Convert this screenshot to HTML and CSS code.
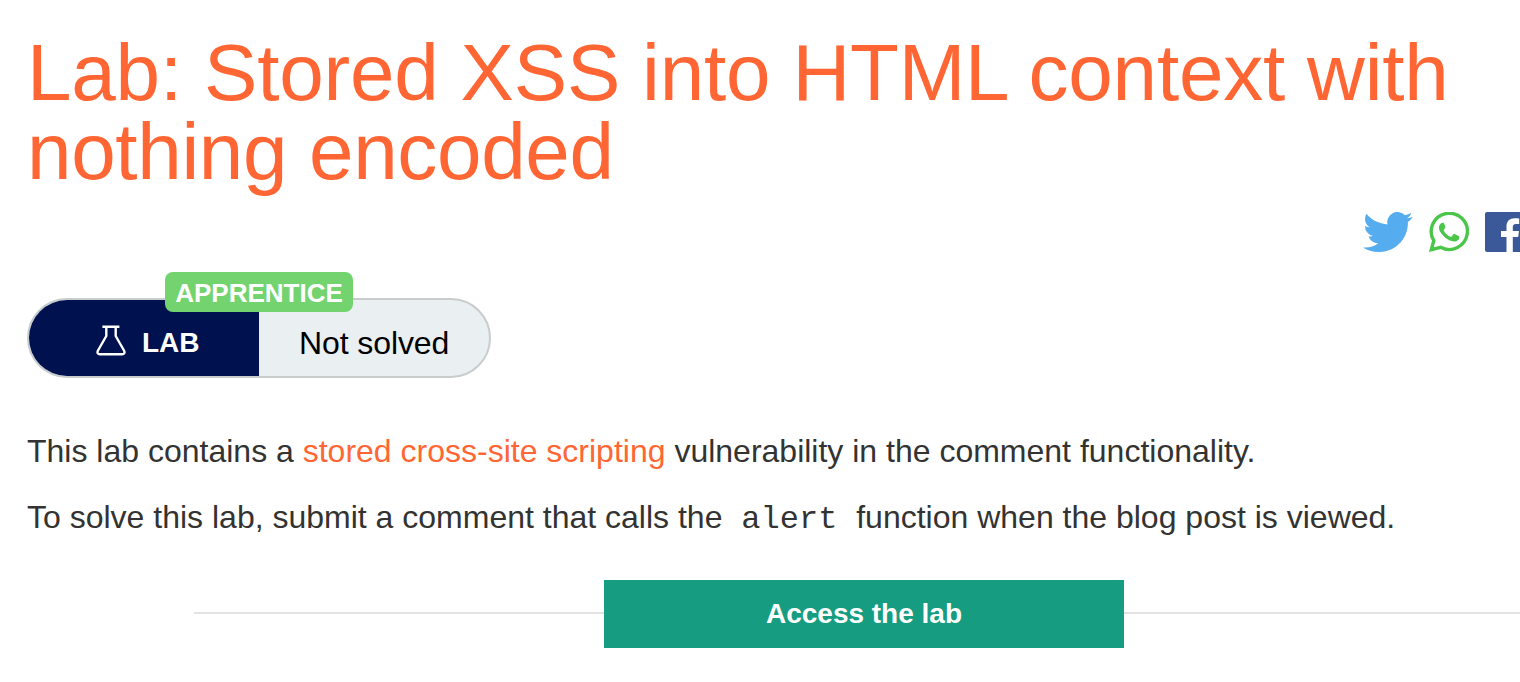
FILE: index.html
```html
<!DOCTYPE html>
<html lang="en">
<head>
<meta charset="utf-8">
<title>Lab: Stored XSS into HTML context with nothing encoded</title>
<link rel="stylesheet" href="styles.css">
</head>
<body>
<main class="page">
  <h1 class="title"><span class="title-first">Lab: Stored XSS into HTML context with</span> <span class="title-second">nothing encoded</span></h1>
  <div class="share">
    <svg class="twitter" viewBox="0 2.25 24 19.5" preserveAspectRatio="none" aria-label="Twitter"><path fill="#55acee" d="M23.953 4.57a10 10 0 01-2.825.775 4.958 4.958 0 002.163-2.723c-.951.555-2.005.959-3.127 1.184a4.92 4.92 0 00-8.384 4.482C7.69 8.095 4.067 6.13 1.64 3.162a4.822 4.822 0 00-.666 2.475c0 1.71.87 3.213 2.188 4.096a4.904 4.904 0 01-2.228-.616v.06a4.923 4.923 0 003.946 4.827 4.996 4.996 0 01-2.212.085 4.936 4.936 0 004.604 3.417 9.867 9.867 0 01-6.102 2.105c-.39 0-.779-.023-1.17-.067a13.995 13.995 0 007.557 2.209c9.053 0 13.998-7.496 13.998-13.985 0-.21 0-.42-.015-.63A9.935 9.935 0 0024 4.590z"/></svg>
    <svg class="whatsapp" viewBox="0 0 40 40" aria-label="WhatsApp"><path fill="none" stroke="#4bc64b" stroke-width="3.4" d="M2.300 37.700 4.800 28.700A18.100 18.100 0 1 1 11.700 35.300Z"/><path fill="#4bc64b" d="M14.200 10.800c-1.100-.1-1.900.1-2.400.8-1.300 1.300-2 2.800-1.800 4.600.2 1.900 1.100 3.700 2.400 5.300 2.700 3.600 5.500 5.900 9.200 7.200 2.400.9 4.300 1.100 6.200.2 1.500-.7 2.400-1.700 2.500-3.200.1-.9 0-1.300-.7-1.700l-4-1.900c-.6-.2-1-.1-1.400.4l-1.600 2c-.3.400-.7.500-1.200.2-2.900-1.300-5-3.200-6.600-6-.3-.5-.2-.8.100-1.200l1.300-1.600c.3-.4.300-.8.100-1.300l-1.500-3.500c-.1-.2-.3-.3-.6-.3Z"/></svg>
    <svg class="facebook" viewBox="0 0 40 40" aria-label="Facebook"><rect width="40" height="40" rx="2" fill="#3b5998"/><path fill="#fff" d="M21.500 40V25H16v-6h5.500v-4.500C21.500 9 24.800 6.200 29.500 6.200c2.300 0 4.200.2 4.700.2v5.500h-3.200c-2.600 0-3.200 1.300-3.200 3.100v4h6.200l-.8 6h-5.400v15Z"/></svg>
  </div>
  <div class="status">
    <div class="lab">
      <svg class="flask" viewBox="0 0 30 32" fill="none" stroke="#fff" stroke-width="2.400" stroke-linejoin="round"><path d="M6.400 2.700H23.400M10.300 3V12L2 26.500C.8 28.700 1.800 30.300 4 30.300H26C28.200 30.300 29.200 28.700 28 26.500L19.700 12V3"/></svg>
      <span class="lab-text">LAB</span>
    </div>
    <div class="state"><span class="state-text">Not solved</span></div>
    <span class="level"><span class="level-text">APPRENTICE</span></span>
  </div>
  <p class="copy intro"><span>This lab contains a <a class="link">stored cross-site scripting</a> vulnerability in the comment functionality.</span></p>
  <p class="copy"><span>To solve this lab, submit a comment that calls the <code class="code">alert</code> function when the blog post is viewed.</span></p>
  <div class="access"><a class="button"><span class="button-text">Access the lab</span></a></div>
</main>
</body>
</html>
```
FILE: styles.css
```css
body {
  margin: 0;
  background: #fff;
  color: #333332;
  font-family: "Liberation Sans", Arial, sans-serif;
  overflow: hidden;
}
.page {
  box-sizing: border-box;
  width: 1520px;
  height: 682px;
  padding: 33px 0 0 27px;
  overflow: hidden;
}
.title {
  margin: 0;
  color: #ff6633;
  font-size: 80px;
  font-weight: 400;
  line-height: 79px;
  white-space: nowrap;
}
.title-first, .title-second { display: block; }
.title-first { letter-spacing: -0.19px; }
.title-second { letter-spacing: -0.33px; }
.share {
  display: flex;
  margin: 21px 0 0 1336px;
  height: 40px;
}
.share svg { flex: none; }
.twitter { width: 50px; height: 40px; margin-right: 16px; }
.whatsapp { width: 40px; height: 40px; margin-right: 16px; }
.facebook { width: 40px; height: 40px; }
.status {
  position: relative;
  display: flex;
  box-sizing: border-box;
  width: 464px;
  height: 80px;
  margin-top: 46px;
  border: 2px solid #c8cccc;
  border-radius: 40px;
  background: #eaeff2;
}
.lab {
  display: flex;
  align-items: center;
  box-sizing: border-box;
  width: 230px;
  padding: 10px 0 0 67px;
  border-radius: 38px 0 0 38px;
  background: #00114f;
  color: #fff;
  font-size: 28px;
  font-weight: 700;
}
.flask { width: 30px; height: 32px; margin: -6px 16px 0 0; }
.state {
  display: flex;
  align-items: center;
  padding: 10px 0 0 40px;
  color: #000;
  font-size: 32px;
  letter-spacing: -0.1px;
}
.level {
  position: absolute;
  left: 136px;
  top: -28px;
  width: 188px;
  height: 40px;
  border-radius: 8px;
  background: #72d36f;
  color: #fff;
  font-size: 26px;
  font-weight: 700;
  line-height: 42px;
  text-align: center;
}
.copy {
  margin: 0 0 18px;
  font-size: 32px;
  line-height: 48px;
  white-space: nowrap;
}
.intro { margin-top: 49px; }
.link { color: #ff6633; }
.code {
  padding: 0 10px;
  font-family: "Liberation Mono", monospace;
  font-size: 32px;
  line-height: 1;
}
.access {
  display: flex;
  align-items: center;
  margin: 39px 0 0 167px;
}
.access::before, .access::after {
  content: "";
  height: 2px;
  margin-bottom: 2px;
  background: #e3e3e3;
}
.access::before { width: 410px; }
.access::after { flex: 1; }
.button {
  width: 520px;
  height: 68px;
  background: #169c80;
  color: #fff;
  font-size: 28px;
  font-weight: 700;
  line-height: 68px;
  text-align: center;
}
```
